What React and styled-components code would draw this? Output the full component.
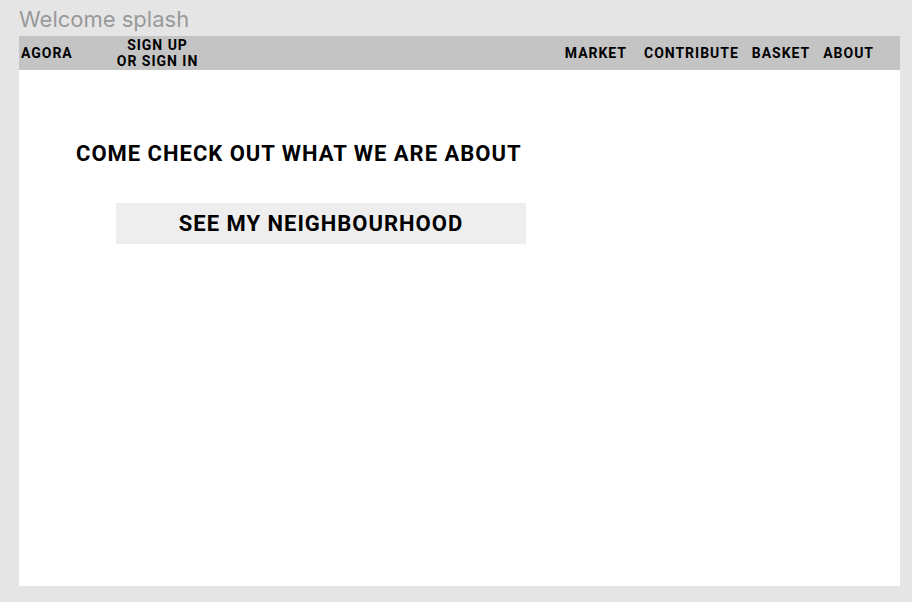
import styled, { createGlobalStyle } from 'styled-components';

const GlobalStyle = createGlobalStyle`
  body {
    margin: 0;
    background: #e5e5e5;
  }
`;

const navRight = ['MARKET', 'CONTRIBUTE', 'BASKET', 'ABOUT'];

const App = () => (
  <>
    <GlobalStyle />
    <Styled.Page>
      <Styled.Title>Welcome splash</Styled.Title>
      <Styled.Frame>
        <Styled.Nav>
          <Styled.NavItem>AGORA</Styled.NavItem>
          <Styled.SignIn>
            SIGN UP
            <br />
            OR SIGN IN
          </Styled.SignIn>
          <Styled.NavRight>
            {navRight.map((label) => (
              <Styled.NavItem key={label}>{label}</Styled.NavItem>
            ))}
          </Styled.NavRight>
        </Styled.Nav>
        <Styled.Hero>
          <Styled.Heading>COME CHECK OUT WHAT WE ARE ABOUT</Styled.Heading>
          <Styled.CtaButton>SEE MY NEIGHBOURHOOD</Styled.CtaButton>
        </Styled.Hero>
      </Styled.Frame>
    </Styled.Page>
  </>
);

const Styled = {
  Page: styled.div`
    padding: 0 12px 16px 19px;
    font-family: Roboto, 'Liberation Sans', sans-serif;
  `,
  Title: styled.div`
    height: 36px;
    line-height: 38px;
    font-family: Inter, 'Liberation Sans', sans-serif;
    font-size: 22px;
    color: #999999;
  `,
  Frame: styled.div`
    width: 881px;
    height: 550px;
    background: #ffffff;
  `,
  Nav: styled.nav`
    display: flex;
    align-items: center;
    height: 34px;
    padding: 0 26px 0 2px;
    background: #c4c4c4;
  `,
  NavItem: styled.span`
    font-size: 14px;
    font-weight: 700;
    letter-spacing: 0.07em;
    color: #000000;
  `,
  SignIn: styled.span`
    margin-left: 44px;
    font-size: 14px;
    font-weight: 700;
    line-height: 16px;
    letter-spacing: 0.07em;
    text-align: center;
  `,
  NavRight: styled.div`
    display: flex;
    gap: 13px;
    margin-left: auto;

    & > :first-child {
      margin-right: 4px;
    }
  `,
  Hero: styled.div`
    display: flex;
    flex-direction: column;
    padding: 72px 0 0 57px;
  `,
  Heading: styled.h1`
    margin: 0;
    font-size: 22px;
    font-weight: 700;
    letter-spacing: 0.045em;
    line-height: 24px;
  `,
  CtaButton: styled.button`
    width: 410px;
    height: 41px;
    margin: 37px 0 0 40px;
    border: none;
    background: #eeeeee;
    font-family: Roboto, 'Liberation Sans', sans-serif;
    font-size: 22px;
    font-weight: 700;
    letter-spacing: 0.045em;
    color: #000000;
  `,
};

export default App;
